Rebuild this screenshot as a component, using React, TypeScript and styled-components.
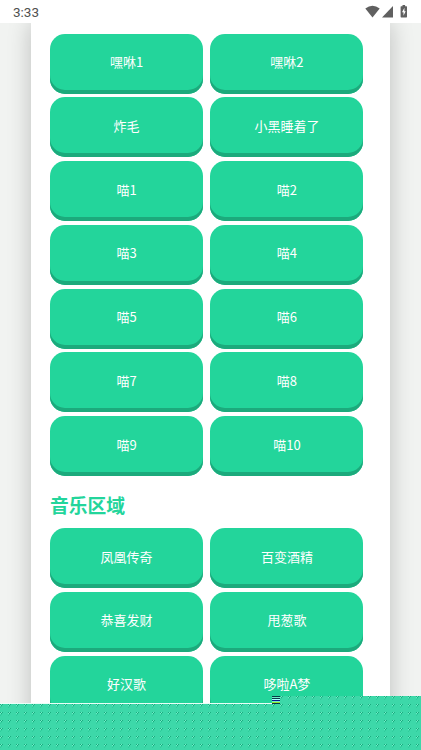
import React from 'react';
import styled, { createGlobalStyle } from 'styled-components';

const Global = createGlobalStyle`
  * { box-sizing: border-box; }
  html, body { margin: 0; height: 750px; overflow: hidden; background: #f1f3f1; }
`;

const Screen = styled.div`
  position: relative;
  width: 421px;
  height: 750px;
  overflow: hidden;
  display: flex;
  flex-direction: column;
  background: #f1f3f1;
  font-family: "Noto Sans CJK SC", sans-serif;
`;

const StatusBar = styled.header`
  flex: none;
  height: 23px;
  padding: 1px 12px 0 13px;
  display: flex;
  align-items: center;
  justify-content: space-between;
  background: #fff;
  color: #505050;
  font: 13.5px/22px Roboto, sans-serif;
  z-index: 1;
`;

const StatusIcons = styled.svg`
  display: block;
  width: 44px;
  height: 14px;
  margin-top: -2px;
`;

const Card = styled.main`
  flex: 1;
  min-height: 0;
  width: 359px;
  margin-left: 31px;
  padding: 10.7px 27px 0 19px;
  background: #fff;
  box-shadow: 0 0 22px rgba(0, 0, 0, 0.22);
`;

const Grid = styled.div`
  display: grid;
  grid-template-columns: 153px 153px;
  grid-auto-rows: 60px;
  gap: 3.75px 7.4px;
`;

const SoundButton = styled.button`
  border: 0;
  padding: 0 0 3.1px;
  border-radius: 15px;
  background: #23d59b;
  box-shadow: inset 0 -4px 0 #1caa7c;
  color: #fff;
  font: 13px/20px "Noto Sans CJK SC", sans-serif;
`;

const Heading = styled.h2`
  margin: 13.2px 0 7.4px;
  height: 31.5px;
  color: #23d59b;
  font-size: 18.75px;
  font-weight: 700;
  line-height: 31px;
`;

const Overlay = styled.svg`
  position: absolute;
  left: 0;
  bottom: 0;
  width: 421px;
  height: 54px;
  z-index: 2;
`;

const cats = ['嘿咻1', '嘿咻2', '炸毛', '小黑睡着了', '喵1', '喵2', '喵3', '喵4', '喵5', '喵6', '喵7', '喵8', '喵9', '喵10'];
const songs = ['凤凰传奇', '百变酒精', '恭喜发财', '甩葱歌', '好汉歌', '哆啦A梦'];

const Sounds = ({ names }: { names: string[] }) => (
  <Grid>
    {names.map((name) => <SoundButton key={name}>{name}</SoundButton>)}
  </Grid>
);

export default function App() {
  return (
    <Screen>
      <Global />
      <StatusBar>
        <span>3:33</span>
        <StatusIcons viewBox="0 0 44 14" fill="#606060">
          <path d="M0.3 4.6Q7.5-.9 14.7 4.6L7.5 13.5Z" />
          <path d="M28 2V13.5H17Z" />
          <path d="M36.2 2.2H37.5V1H40.1V2.2H41.5Q42 2.2 42 2.8V12.8Q42 13.4 41.4 13.4H36.2Q35.6 13.4 35.6 12.8V2.8Q35.6 2.2 36.2 2.2Z" />
          <path d="M39.4 3.8L37 8.2H38.5V11.7L40.7 7.2H39.4Z" fill="#fff" />
        </StatusIcons>
      </StatusBar>
      <Card>
        <Sounds names={cats} />
        <Heading>音乐区域</Heading>
        <Sounds names={songs} />
      </Card>
      <Overlay viewBox="0 0 421 54" shapeRendering="crispEdges" aria-hidden="true">
        <defs>
          <pattern id="mesh" width="8" height="8" patternUnits="userSpaceOnUse">
            <rect width="8" height="8" fill="#3dd8a9" />
            <path d="M0 0h1v1h-1zM2 0h1v1h-1zM1 1h1v1h-1z" fill="#1aae80" />
            <path d="M1 0h1v1h-1zM0 1h1v1h-1z" fill="#70edc8" />
            <path d="M0 3h1v1h-1zM1 2h1v1h-1z" fill="#30cc9c" />
          </pattern>
        </defs>
        <path d="M0 7H272V8H0Z" fill="#e9fff8" />
        <path d="M0 8H272V0H421V54H0Z" fill="url(#mesh)" />
        <path d="M272 0h8v8h-8z" fill="#063b48" />
        <path d="M272 1h8v1h-8zM272 5h8v1h-8z" fill="#70efc9" />
        <path d="M272 3h8v1h-8z" fill="#a8ffff" />
        <path d="M272 4h8v1h-8z" fill="#0b168f" />
        <path d="M272 6h8v1h-8z" fill="#94e629" />
      </Overlay>
    </Screen>
  );
}
